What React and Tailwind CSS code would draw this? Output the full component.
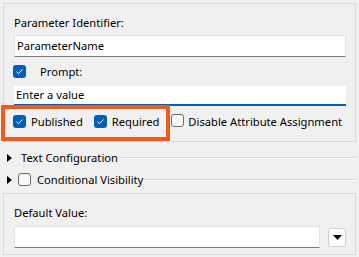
import React from "react";

function Check({ checked }) {
  if (checked) {
    return (
      <span className="inline-flex h-[13px] w-[13px] shrink-0 items-center justify-center rounded-[3px] bg-[#005fb8]">
        <svg width="9" height="9" viewBox="0 0 9 9">
          <path d="M1.5 4.8 L3.5 6.6 L7.5 2.4" fill="none" stroke="#ffffff" strokeWidth="1" />
        </svg>
      </span>
    );
  }
  return <span className="inline-block h-[13px] w-[13px] shrink-0 rounded-[3px] border border-[#6b6b6b] bg-[#f8f8f8]" />;
}

function Arrow() {
  return (
    <svg width="5" height="8" viewBox="0 0 5 8" className="shrink-0">
      <path d="M0 0 L5 4 L0 8 Z" fill="#000" />
    </svg>
  );
}

function Field({ value, focused, className }) {
  return (
    <div
      className={
        "flex items-center bg-white pl-[2px] " +
        (focused
          ? "h-[20px] border-b-2 border-[#005fb8]"
          : "h-[22px] border border-[#e3e3e3] border-b-[#7a7a7a]") +
        " " +
        (className || "")
      }
    >
      {value}
    </div>
  );
}

export default function App() {
  return (
    <div
      className="relative h-[257px] w-[359px] overflow-hidden whitespace-nowrap bg-[#f0f0f0] text-[11.2px] leading-none text-black"
      style={{ fontFamily: '"Noto Sans", "Open Sans", sans-serif' }}
    >
      <div className="mx-[3px] mt-[3px] h-[139px] border border-[#d9d9d9] pl-[10px] pr-[9px]">
        <div className="mt-[13px] h-[12px] leading-[12px]">Parameter Identifier:</div>
        <Field value="ParameterName" className="mt-[6px]" />
        <div className="mt-[8px] flex h-[13px] items-center">
          <span className="-ml-[1px]"><Check checked /></span>
          <span className="ml-[14px]">Prompt:</span>
        </div>
        <Field value="Enter a value" focused className="mt-[8px]" />
        <div className="mt-[9px] flex h-[13px] items-center">
          <span className="-ml-[1px]"><Check checked /></span>
          <span className="ml-[5px]">Published</span>
          <span className="ml-[11px]"><Check checked /></span>
          <span className="ml-[5px]">Required</span>
          <span className="ml-[12px]"><Check /></span>
          <span className="ml-[4px]">Disable Attribute Assignment</span>
        </div>
      </div>

      <div className="mt-[9px] flex h-[14px] items-center pl-[7px] pr-[3px]">
        <Arrow />
        <span className="ml-[9px]">Text Configuration</span>
        <div className="ml-[2px] h-[2px] flex-1 border-t border-b border-t-[#d9d9d9] border-b-white" />
      </div>
      <div className="mt-[8px] flex h-[14px] items-center pl-[7px] pr-[3px]">
        <Arrow />
        <span className="ml-[6px]"><Check /></span>
        <span className="ml-[6px]">Conditional Visibility</span>
        <div className="ml-[2px] h-[2px] flex-1 border-t border-b border-t-[#d9d9d9] border-b-white" />
      </div>

      <div className="mx-[3px] mt-[6px] h-[62px] border border-[#d9d9d9] pl-[10px] pr-[9px]">
        <div className="mt-[13px] h-[12px] leading-[12px]">Default Value:</div>
        <div className="mt-[7px] flex items-center">
          <Field value="" className="flex-1" />
          <div className="ml-[8px] flex h-[19px] w-[18px] items-center justify-center rounded-[3px] border border-[#cfcfcf] bg-white">
            <svg width="9" height="5" viewBox="0 0 9 5">
              <path d="M0 0 L9 0 L4.5 5 Z" fill="#000" />
            </svg>
          </div>
        </div>
      </div>

      <div className="absolute left-[1px] top-[105px] h-[36px] w-[169px] border-4 border-[#f05a1e]" />
    </div>
  );
}
